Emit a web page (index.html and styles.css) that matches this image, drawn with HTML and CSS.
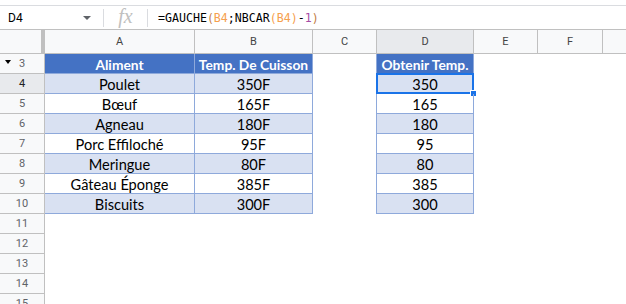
FILE: index.html
```html
<!DOCTYPE html>
<html lang="fr">
<head>
<meta charset="utf-8"/>
<title>GAUCHE / NBCAR</title>
<link rel="stylesheet" href="styles.css">
</head>
<body>

<!-- Barre de formule --------------------------------------------------------->
<div class="formula-bar">
  <div class="fb-inner">
    <div class="name-box">D4</div>
    <span class="nb-arrow"></span>
    <span class="sep"></span>
    <span class="fx">fx</span>
    <span class="sep"></span>
    <div class="formula">=GAUCHE<span class="p1">(</span><span class="ref">B4</span>;NBCAR<span class="p2">(</span><span class="ref">B4</span><span class="p2">)</span>-<span class="num">1</span><span class="p1">)</span></div>
  </div>
</div>

<!-- Feuille ------------------------------------------------------------------>
<div class="sheet">
  <!-- en-têtes de colonnes -->
  <div class="corner"></div>
  <div class="ch">A</div>
  <div class="ch">B</div>
  <div class="ch">C</div>
  <div class="ch sel">D</div>
  <div class="ch">E</div>
  <div class="ch">F</div>
  <div class="ch last"></div>

  <!-- 3 -->
  <div class="rh"><span class="tri"></span>3</div>
  <div class="t th">Aliment</div>
  <div class="t th">Temp. De Cuisson</div>
  <div class="c edge"></div>
  <div class="t th">Obtenir Temp.</div>
  <div class="c"></div><div class="c"></div><div class="c"></div>

  <!-- 4 -->
  <div class="rh sel">4</div>
  <div class="t alt">Poulet</div>
  <div class="t alt">350F</div>
  <div class="c edge"></div>
  <div class="t alt active">350<span class="cursor"><span class="handle"></span></span></div>
  <div class="c"></div><div class="c"></div><div class="c"></div>

  <!-- 5 -->
  <div class="rh">5</div>
  <div class="t">Bœuf</div>
  <div class="t">165F</div>
  <div class="c edge"></div>
  <div class="t">165</div>
  <div class="c"></div><div class="c"></div><div class="c"></div>

  <!-- 6 -->
  <div class="rh">6</div>
  <div class="t alt">Agneau</div>
  <div class="t alt">180F</div>
  <div class="c edge"></div>
  <div class="t alt">180</div>
  <div class="c"></div><div class="c"></div><div class="c"></div>

  <!-- 7 -->
  <div class="rh">7</div>
  <div class="t">Porc Effiloché</div>
  <div class="t">95F</div>
  <div class="c edge"></div>
  <div class="t">95</div>
  <div class="c"></div><div class="c"></div><div class="c"></div>

  <!-- 8 -->
  <div class="rh">8</div>
  <div class="t alt">Meringue</div>
  <div class="t alt">80F</div>
  <div class="c edge"></div>
  <div class="t alt">80</div>
  <div class="c"></div><div class="c"></div><div class="c"></div>

  <!-- 9 -->
  <div class="rh">9</div>
  <div class="t">Gâteau Éponge</div>
  <div class="t">385F</div>
  <div class="c edge"></div>
  <div class="t">385</div>
  <div class="c"></div><div class="c"></div><div class="c"></div>

  <!-- 10 -->
  <div class="rh">10</div>
  <div class="t alt">Biscuits</div>
  <div class="t alt">300F</div>
  <div class="c edge"></div>
  <div class="t alt">300</div>
  <div class="c"></div><div class="c"></div><div class="c"></div>

  <!-- lignes vides -->
  <div class="rh">11</div><div class="c"></div><div class="c"></div><div class="c"></div><div class="c"></div><div class="c"></div><div class="c"></div><div class="c"></div>
  <div class="rh">12</div><div class="c"></div><div class="c"></div><div class="c"></div><div class="c"></div><div class="c"></div><div class="c"></div><div class="c"></div>
  <div class="rh">13</div><div class="c"></div><div class="c"></div><div class="c"></div><div class="c"></div><div class="c"></div><div class="c"></div><div class="c"></div>
  <div class="rh">14</div><div class="c"></div><div class="c"></div><div class="c"></div><div class="c"></div><div class="c"></div><div class="c"></div><div class="c"></div>
  <div class="rh">15</div><div class="c"></div><div class="c"></div><div class="c"></div><div class="c"></div><div class="c"></div><div class="c"></div><div class="c"></div>
</div>

</body>
</html>
```

FILE: styles.css
```css
:root{
  --grid:#c0c0c0;
  --head:#f8f9fa;
  --head-sel:#e8eaed;
  --blue:#4472c4;
  --stripe:#d9e1f2;
  --tborder:#8ea9db;
  --accent:#1a73e8;
}
*{margin:0;padding:0;box-sizing:border-box}
body{
  background:#fff;
  font-family:Roboto,"Liberation Sans",sans-serif;
  color:#000;
  overflow:hidden;
}

/* barre de formule */
.formula-bar{
  height:30px;
  padding-top:5px;
  border-bottom:1px solid var(--grid);
}
.fb-inner{
  height:24px;
  border-top:1px solid #dadce0;
  display:flex;
  align-items:center;
}
.name-box{
  width:80px;
  padding-left:8px;
  font-size:12px;
  color:#000;
}
.nb-arrow{
  width:0;height:0;
  border-left:4px solid transparent;
  border-right:4px solid transparent;
  border-top:4px solid #5f6368;
  margin-left:3px;
  margin-right:12px;
}
.sep{
  width:1px;
  height:18px;
  background:#dadce0;
}
.fx{
  width:43px;
  text-align:center;
  font-family:"Liberation Serif",serif;
  font-style:italic;
  font-size:20px;
  color:#c0c0c0;
  line-height:1;
  margin-top:-3px;
}
.formula{
  padding-left:10px;
  font-family:"DejaVu Sans Mono",monospace;
  font-size:11.6px;
  color:#000;
}
.formula .ref{color:#f6a04d}
.formula .p1{color:#c27c44}
.formula .p2{color:#f6a04d}
.formula .num{color:#a64ca6}

/* feuille */
.sheet{
  display:grid;
  grid-template-columns:45px 150px 118px 64px 97px 64px 65px 1fr;
  grid-template-rows:24px;
  grid-auto-rows:20px;
}
.corner{
  background:var(--head);
  border-right:4px solid var(--grid);
  border-bottom:1px solid var(--grid);
}
.ch{
  background:var(--head);
  border-right:1px solid var(--grid);
  border-bottom:1px solid var(--grid);
  color:#444;
  font-size:11px;
  display:flex;
  align-items:center;
  justify-content:center;
}
.ch.sel{background:var(--head-sel)}
.ch.last{border-right:none}
.rh{
  position:relative;
  background:var(--head);
  border-right:1px solid var(--grid);
  border-bottom:1px solid var(--grid);
  color:#5f6368;
  font-size:11px;
  display:flex;
  align-items:center;
  justify-content:center;
}
.rh.sel{background:var(--head-sel);color:#202124}
.tri{
  position:absolute;
  left:5px;
  top:6px;
  width:0;height:0;
  border-left:3px solid transparent;
  border-right:3px solid transparent;
  border-top:4px solid #000;
}
.c{background:#fff}
.c.edge{border-right:1px solid var(--tborder)}

/* tableau */
.t{
  position:relative;
  border-right:1px solid var(--tborder);
  border-bottom:1px solid var(--tborder);
  font-family:Lato,"Open Sans",sans-serif;
  font-size:14.6px;
  color:#000;
  display:flex;
  align-items:center;
  justify-content:center;
  padding-top:1px;
  white-space:nowrap;
}
.t.alt{background:var(--stripe)}
.t.th{
  background:var(--blue);
  color:#fff;
  font-weight:700;
  font-size:13.8px;
}

/* cellule active */
.cursor{
  position:absolute;
  left:-1px;
  top:-1px;
  right:-1px;
  bottom:-1px;
  border:2px solid var(--accent);
}
.handle{
  position:absolute;
  right:-5px;
  bottom:-5px;
  width:7px;
  height:7px;
  background:var(--accent);
  border:1px solid #fff;
}
```
